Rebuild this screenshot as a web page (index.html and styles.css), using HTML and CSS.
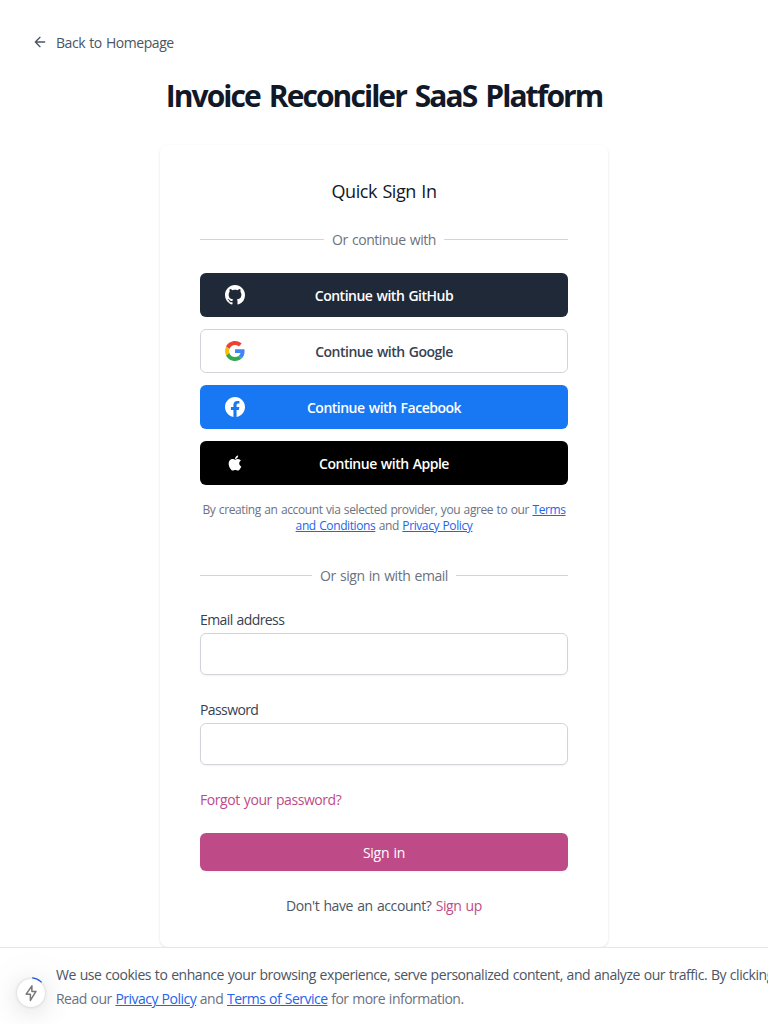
FILE: index.html
```html
<!DOCTYPE html>
<html lang="en">
<head>
<meta charset="utf-8">
<title>Invoice Reconciler SaaS Platform</title>
<link rel="stylesheet" href="styles.css">
</head>
<body>
<main class="page">
  <a class="back"><svg width="16" height="16" viewBox="0 0 24 24" fill="none" stroke="currentColor" stroke-width="2" stroke-linecap="round" stroke-linejoin="round"><path d="m12 19-7-7 7-7M19 12H5"/></svg><span>Back to Homepage</span></a>
  <h1 class="title">Invoice Reconciler SaaS Platform</h1>
  <section class="card">
    <h2 class="subtitle">Quick Sign In</h2>
    <div class="divider"><span>Or continue with</span></div>
    <div class="providers">
      <button class="provider github"><svg viewBox="0 0 24 24" fill="currentColor"><path fill-rule="evenodd" clip-rule="evenodd" d="M12 0C5.37 0 0 5.37 0 12c0 5.31 3.435 9.795 8.205 11.385.6.105.825-.255.825-.57 0-.285-.015-1.23-.015-2.235-3.015.555-3.795-.735-4.035-1.41-.135-.345-.72-1.41-1.23-1.695-.42-.225-1.02-.78-.015-.795.945-.015 1.62.87 1.845 1.23 1.08 1.815 2.805 1.305 3.495.99.105-.78.42-1.305.765-1.605-2.67-.3-5.46-1.335-5.46-5.925 0-1.305.465-2.385 1.23-3.225-.12-.3-.54-1.53.12-3.18 0 0 1.005-.315 3.3 1.23.96-.27 1.98-.405 3-.405s2.04.135 3 .405c2.295-1.56 3.3-1.23 3.3-1.23.66 1.65.24 2.88.12 3.18.765.84 1.23 1.905 1.23 3.225 0 4.605-2.805 5.625-5.475 5.925.435.375.81 1.095.81 2.22 0 1.605-.015 2.895-.015 3.3 0 .315.225.69.825.57A12.02 12.02 0 0 0 24 12c0-6.63-5.37-12-12-12z"/></svg><span>Continue with GitHub</span></button>
      <button class="provider google"><svg viewBox="0 0 48 48"><path fill="#EA4335" d="M24 9.5c3.54 0 6.71 1.22 9.21 3.6l6.85-6.85C35.9 2.38 30.47 0 24 0 14.62 0 6.51 5.38 2.56 13.22l7.98 6.19C12.43 13.72 17.74 9.5 24 9.5z"/><path fill="#4285F4" d="M46.98 24.55c0-1.57-.15-3.09-.38-4.55H24v9.02h12.94c-.58 2.96-2.26 5.48-4.78 7.18l7.73 6c4.51-4.18 7.09-10.36 7.09-17.65z"/><path fill="#FBBC05" d="M10.53 28.59c-.48-1.45-.76-2.99-.76-4.59s.27-3.14.76-4.59l-7.98-6.19C.92 16.46 0 20.12 0 24c0 3.88.92 7.54 2.56 10.78l7.97-6.19z"/><path fill="#34A853" d="M24 48c6.48 0 11.93-2.13 15.89-5.81l-7.73-6c-2.15 1.45-4.92 2.3-8.16 2.3-6.26 0-11.57-4.22-13.47-9.91l-7.98 6.19C6.51 42.62 14.62 48 24 48z"/></svg><span>Continue with Google</span></button>
      <button class="provider facebook"><svg viewBox="0 0 24 24" fill="currentColor"><path d="M24 12.073c0-6.627-5.373-12-12-12s-12 5.373-12 12c0 5.99 4.388 10.954 10.125 11.854v-8.385H7.078v-3.47h3.047V9.43c0-3.007 1.792-4.669 4.533-4.669 1.312 0 2.686.235 2.686.235v2.953H15.83c-1.491 0-1.956.925-1.956 1.874v2.25h3.328l-.532 3.47h-2.796v8.385C19.612 23.027 24 18.062 24 12.073z"/></svg><span>Continue with Facebook</span></button>
      <button class="provider apple"><svg viewBox="0 0 24 24" fill="currentColor"><path d="M17.05 20.28c-.98.95-2.05.8-3.08.35-1.09-.46-2.09-.48-3.24 0-1.44.62-2.2.44-3.06-.35C2.79 15.25 3.51 7.59 9.05 7.31c1.35.07 2.29.74 3.08.8 1.18-.24 2.31-.93 3.57-.84 1.51.12 2.65.72 3.4 1.8-3.12 1.87-2.38 5.98.48 7.13-.57 1.5-1.31 2.99-2.54 4.09zM12.03 7.25c-.15-2.23 1.66-4.07 3.74-4.25.29 2.58-2.34 4.5-3.74 4.25z"/></svg><span>Continue with Apple</span></button>
    </div>
    <p class="terms">By creating an account via selected provider, you agree to our <a>Terms<br>and Conditions</a> and <a>Privacy Policy</a></p>
    <div class="divider second"><span>Or sign in with email</span></div>
    <form class="form">
      <label class="field"><span>Email address</span><input type="email"></label>
      <label class="field"><span>Password</span><input type="password"></label>
      <a class="forgot">Forgot your password?</a>
      <button class="submit" type="button">Sign in</button>
    </form>
    <p class="signup">Don't have an account? <a>Sign up</a></p>
  </section>
</main>
<footer class="cookies">
  <svg class="cookie-icon" viewBox="0 0 20 20" fill="none" stroke="#2563eb" stroke-width="1.2" stroke-linecap="round"><path d="M8.6 1.8q4.6.4 8.6 4.2"/></svg>
  <div class="cookie-text">
    <p class="c1">We use cookies to enhance your browsing experience, serve personalized content, and analyze our traffic. By clicking</p>
    <p class="c2">Read our <a>Privacy Policy</a> and <a>Terms of Service</a> for more information.</p>
  </div>
</footer>
<div class="bolt"><svg width="20" height="20" viewBox="0 0 20 20" fill="none" stroke="#777" stroke-width="1.5" stroke-linejoin="round"><path d="M10.9 2.8 5.2 11.2H9.4V17.4L15 8.4H10.9z"/></svg></div>
</body>
</html>
```
FILE: styles.css
```css
* { box-sizing: border-box; }
body { margin: 0; height: 1024px; overflow: hidden; background: #fff; font: 14px/20px "Open Sans", "Noto Sans", sans-serif; letter-spacing: -.45px; word-spacing: 1px; color: #4b5563; }
h1, h2, p { margin: 0; font-weight: 400; }
button { font: inherit; letter-spacing: inherit; word-spacing: inherit; border: 0; }
.page { display: flex; flex-direction: column; }
.back { display: flex; align-items: center; gap: 8px; margin: 32px 0 0 32px; height: 20px; }
.back span { padding-top: 2px; }
.title { margin-top: 26px; font-size: 30px; line-height: 36px; font-weight: 700; color: #111827; text-align: center; letter-spacing: -1.92px; word-spacing: 3px; }
.card { width: 448px; height: 802px; margin: 31px auto 0; padding: 32px 40px; border-radius: 8px; box-shadow: 0 1px 3px rgba(0,0,0,.1), 0 1px 2px -1px rgba(0,0,0,.1); }
.subtitle { font-size: 18px; line-height: 28px; color: #111827; text-align: center; letter-spacing: -.4px; }
.divider { display: flex; align-items: center; gap: 8px; margin-top: 24px; height: 20px; color: #6b7280; white-space: nowrap; }
.divider span { padding-top: 2px; }
.divider::before, .divider::after { content: ""; flex: 1; height: 1px; background: #d1d5db; }
.providers { display: grid; gap: 12px; margin-top: 24px; }
.provider { position: relative; height: 44px; padding: 2px 0 0; border-radius: 6px; font-weight: 600; color: #fff; text-align: center; letter-spacing: -.5px; }
.provider svg { position: absolute; left: 25px; top: 12px; width: 20px; height: 20px; }
.github { background: #1f2937; }
.google { background: #fff; color: #374151; border: 1px solid #d1d5db; }
.google svg { left: 24px; top: 11px; }
.facebook { background: #1877f2; }
.apple { background: #000; }
.terms { margin-top: 17px; font-size: 12px; line-height: 16px; text-align: center; color: #6b7280; white-space: nowrap; letter-spacing: -.4px; word-spacing: .7px; }
.terms a, .c2 a { color: #2563eb; text-decoration: underline; }
.second { margin-top: 31px; }
.form { margin-top: 25px; display: flex; flex-direction: column; }
.field { display: block; margin-bottom: 25px; line-height: 20px; color: #374151; letter-spacing: -.6px; }
.field span { display: block; }
.field input { display: block; width: 368px; height: 42px; margin-top: 3px; border: 1px solid #d1d5db; border-radius: 6px; box-shadow: 0 1px 2px rgba(0,0,0,.05); }
.forgot { color: #be4b88; }
.submit { height: 38px; margin-top: 23px; padding: 2px 0 0; border-radius: 6px; background: #be4b88; color: #fff; letter-spacing: -.3px; box-shadow: 0 1px 2px rgba(0,0,0,.05); }
.signup { margin-top: 25px; text-align: center; letter-spacing: -.42px; }
.signup a { color: #be4b88; }
.cookies { position: absolute; left: 0; right: 0; top: 947px; height: 77px; display: flex; gap: 12px; padding: 15px 0 0 24px; overflow: hidden; border-top: 1px solid #e5e7eb; background: #fff; }
.cookie-icon { flex: none; width: 20px; height: 20px; margin-top: 13px; }
.cookie-text { white-space: nowrap; line-height: 24px; letter-spacing: -.45px; word-spacing: .6px; }
.c2 { color: #6b7280; letter-spacing: -.52px; }
.bolt { position: absolute; left: 17px; top: 979px; width: 28px; height: 28px; display: grid; place-items: center; border-radius: 50%; background: #fff; box-shadow: 0 0 3px rgba(0,0,0,.18), 0 4px 24px rgba(0,0,0,.14), 0 0 60px rgba(0,0,0,.08); }
```
